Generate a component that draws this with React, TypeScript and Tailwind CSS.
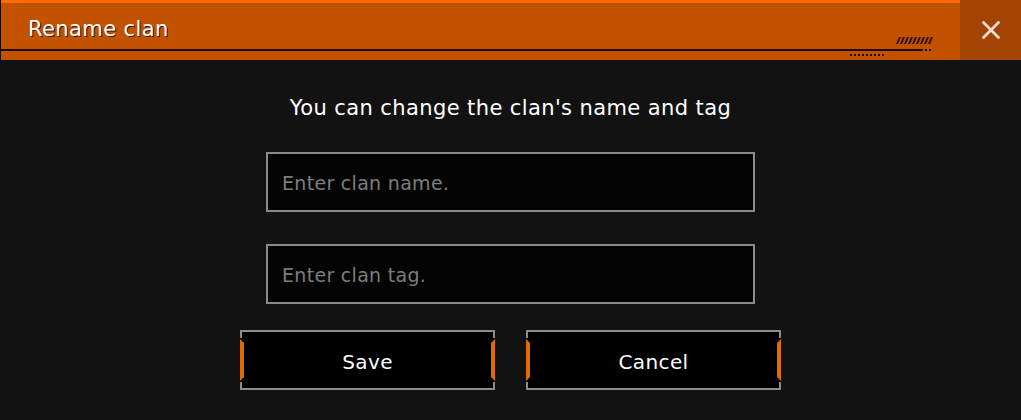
import { X } from 'lucide-react'

function SideBar({ side }: { side: 'left' | 'right' }) {
  const left = side === 'left'
  return (
    <div className={`absolute top-0 bottom-0 flex w-[5px] flex-col ${left ? 'left-0 items-start' : 'right-0 items-end'}`}>
      <div className="h-[6px] w-[2px] bg-[#8c8c8c]" />
      <div
        className={`my-[1px] w-[4px] flex-1 bg-[#e06c00] ${
          left
            ? '[clip-path:polygon(0_0,100%_4px,100%_calc(100%-4px),0_100%)]'
            : '[clip-path:polygon(0_4px,100%_0,100%_100%,0_calc(100%-4px))]'
        }`}
      />
      <div className="h-[6px] w-[2px] bg-[#8c8c8c]" />
    </div>
  )
}

function GameButton({ label }: { label: string }) {
  return (
    <button className="relative flex h-[60px] w-[255px] items-center justify-center border-y-2 border-[#8c8c8c] bg-black pt-[3px] text-[20px] tracking-[0.4px] text-white">
      <SideBar side="left" />
      <SideBar side="right" />
      {label}
    </button>
  )
}

function Hatch() {
  return (
    <svg width="40" height="8" viewBox="0 0 40 8" className="block">
      {[0, 1, 2, 3, 4, 5, 6, 7, 8].map((i) => (
        <polygon key={i} points={`${i * 4 + 3},0 ${i * 4 + 5},0 ${i * 4 + 2},7 ${i * 4},7`} fill="#2a1200" />
      ))}
    </svg>
  )
}

export default function App() {
  return (
    <div className="h-[420px] w-[1021px] overflow-hidden bg-[#121212] font-['DejaVu_Sans',sans-serif]">
      {/* Header */}
      <div className="flex h-[60px]">
        <div className="relative flex flex-1 flex-col border-l border-[#1a0a00] bg-[#c25100]">
          <div className="h-[3px] bg-[#ff6a00]" />
          <div className="flex h-[46px] items-start justify-between pl-[27px] pr-[24px]">
            <span className="mt-[12px] text-[21px] leading-[28px] tracking-[0.4px] text-white [text-shadow:1px_1px_0_#3a1600]">
              Rename clan
            </span>
            <div className="mt-[34px]">
              <Hatch />
            </div>
          </div>
          <div className="flex items-center">
            <div className="h-[2px] w-[922px] bg-[#1a0c02]" />
            <div className="ml-[2px] h-[2px] w-[2px] bg-[#1a0c02]" />
            <div className="ml-[2px] h-[2px] w-[2px] bg-[#1a0c02]" />
          </div>
          <div className="mt-[3px] flex gap-[2px] pl-[849px]">
            {[0, 1, 2, 3, 4, 5, 6, 7, 8].map((i) => (
              <div key={i} className="h-[2px] w-[2px] bg-[#1a0c02]" />
            ))}
          </div>
        </div>
        <button className="flex w-[61px] items-center justify-center bg-[#a34404] text-[#f3ddd0]">
          <X size={30} strokeWidth={2.2} />
        </button>
      </div>

      {/* Body */}
      <div className="flex flex-col items-center">
        <p className="mt-[34px] h-[28px] text-[21px] leading-[28px] tracking-[0.4px] text-white">
          You can change the clan's name and tag
        </p>
        <input
          className="mt-[30px] h-[60px] w-[489px] border-2 border-[#8a8a8a] bg-[#040404] px-[14px] pt-[2px] text-[19px] tracking-[0.3px] text-white outline-none placeholder:text-[#7d7d7d]"
          placeholder="Enter clan name."
        />
        <input
          className="mt-[32px] h-[60px] w-[489px] border-2 border-[#8a8a8a] bg-[#040404] px-[14px] pt-[2px] text-[19px] tracking-[0.3px] text-white outline-none placeholder:text-[#7d7d7d]"
          placeholder="Enter clan tag."
        />
        <div className="mt-[26px] flex gap-[31px]">
          <GameButton label="Save" />
          <GameButton label="Cancel" />
        </div>
      </div>
    </div>
  )
}
